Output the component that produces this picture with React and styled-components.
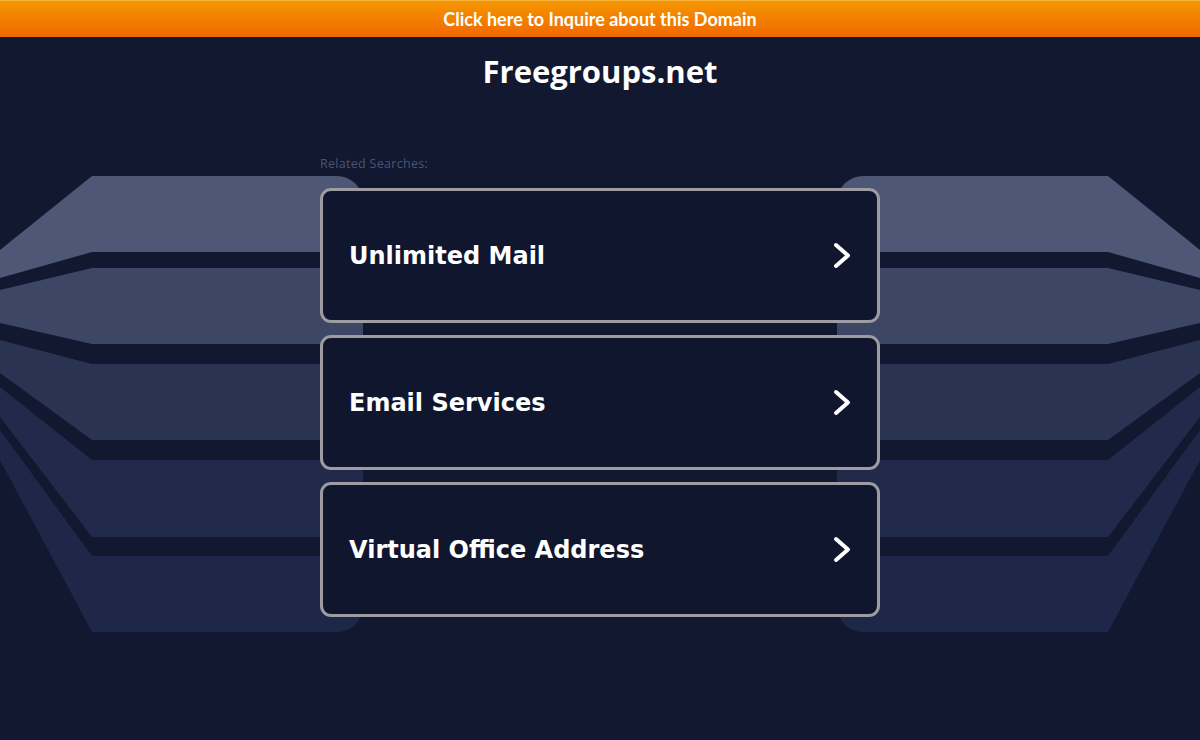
import React from 'react'
import styled, { createGlobalStyle } from 'styled-components'

const GlobalStyle = createGlobalStyle`
  html, body {
    margin: 0;
    padding: 0;
    background: #111830;
  }
`

const searches = ['Unlimited Mail', 'Email Services', 'Virtual Office Address']

// left side bands, page coordinates; the right side is the mirror
const bands = [
    { fill: '#4e5775', points: '0,250 92,176 420,176 420,252 92,252 0,278' },
    { fill: '#3d4665', points: '0,290 92,268 420,268 420,344 92,344 0,323' },
    { fill: '#2b3353', points: '0,340 92,364 420,364 420,440 92,440 0,373' },
    { fill: '#222a4b', points: '0,387 92,460 420,460 420,537 92,537 0,417' },
    { fill: '#1e2748', points: '0,430 92,556 420,556 420,632 92,632 0,460' },
]

function Decor({ side }) {
    const id = 'clip-' + side
    return (
        <DecorSvg $side={side} viewBox="0 0 380 740" width="380" height="740">
            <defs>
                <clipPath id={id}>
                    <rect x="-40" y="176" width="403" height="456" rx="26" />
                </clipPath>
            </defs>
            <g clipPath={`url(#${id})`}>
                {bands.map((b, i) => (
                    <polygon key={i} points={b.points} fill={b.fill} />
                ))}
            </g>
        </DecorSvg>
    )
}

function Chevron() {
    return (
        <svg width="18" height="27" viewBox="0 0 18 27">
            <polyline points="3,3 15,13.5 3,24" fill="none" stroke="#fff" strokeWidth="4" strokeLinecap="round" strokeLinejoin="round" />
        </svg>
    )
}

function App() {
    return (
        <Page>
            <GlobalStyle />
            <Decor side="left" />
            <Decor side="right" />
            <TopBar href="#">Click here to Inquire about this Domain</TopBar>
            <Title>Freegroups.net</Title>
            <Main>
                <Label>Related Searches:</Label>
                <List>
                    {searches.map((s) => (
                        <Card key={s} href="#">
                            <CardText>{s}</CardText>
                            <Chevron />
                        </Card>
                    ))}
                </List>
            </Main>
        </Page>
    )
}

export default App

const Page = styled.div`
    position: relative;
    min-height: 740px;
    background: #111830;
    overflow: hidden;
`

const DecorSvg = styled.svg`
    position: absolute;
    top: 0;
    ${(p) => (p.$side === 'left' ? 'left: 0;' : 'right: 0; transform: scaleX(-1);')}
    z-index: 0;
`

const TopBar = styled.a`
    position: relative;
    z-index: 1;
    display: block;
    height: 37px;
    line-height: 36px;
    text-align: center;
    background: linear-gradient(#f59600, #f06800);
    border-top: 1px solid #f8b13a;
    box-sizing: border-box;
    color: #fff;
    font-family: Lato, "Open Sans", sans-serif;
    font-weight: 700;
    font-size: 18px;
    text-decoration: none;
`

const Title = styled.h1`
    position: relative;
    z-index: 1;
    margin: 14px 0 0;
    text-align: center;
    color: #fff;
    font-family: "Open Sans", sans-serif;
    font-weight: 700;
    font-size: 31px;
    line-height: 40px;
`

const Main = styled.div`
    position: relative;
    z-index: 1;
    width: 560px;
    margin: 66px auto 0;
`

const Label = styled.div`
    color: #4c5473;
    font-family: "Open Sans", sans-serif;
    font-size: 12.5px;
    letter-spacing: 0.3px;
    line-height: 14px;
    margin-bottom: 17px;
`

const List = styled.div`
    display: flex;
    flex-direction: column;
    gap: 12px;
`

const Card = styled.a`
    display: flex;
    align-items: center;
    justify-content: space-between;
    height: 135px;
    box-sizing: border-box;
    padding: 0 26px 0 26px;
    background: #10162d;
    border: 3px solid #9c9ca2;
    border-radius: 11px;
    text-decoration: none;
`

const CardText = styled.span`
    color: #fff;
    font-family: "DejaVu Sans", Verdana, sans-serif;
    font-weight: 700;
    font-size: 24px;
`
